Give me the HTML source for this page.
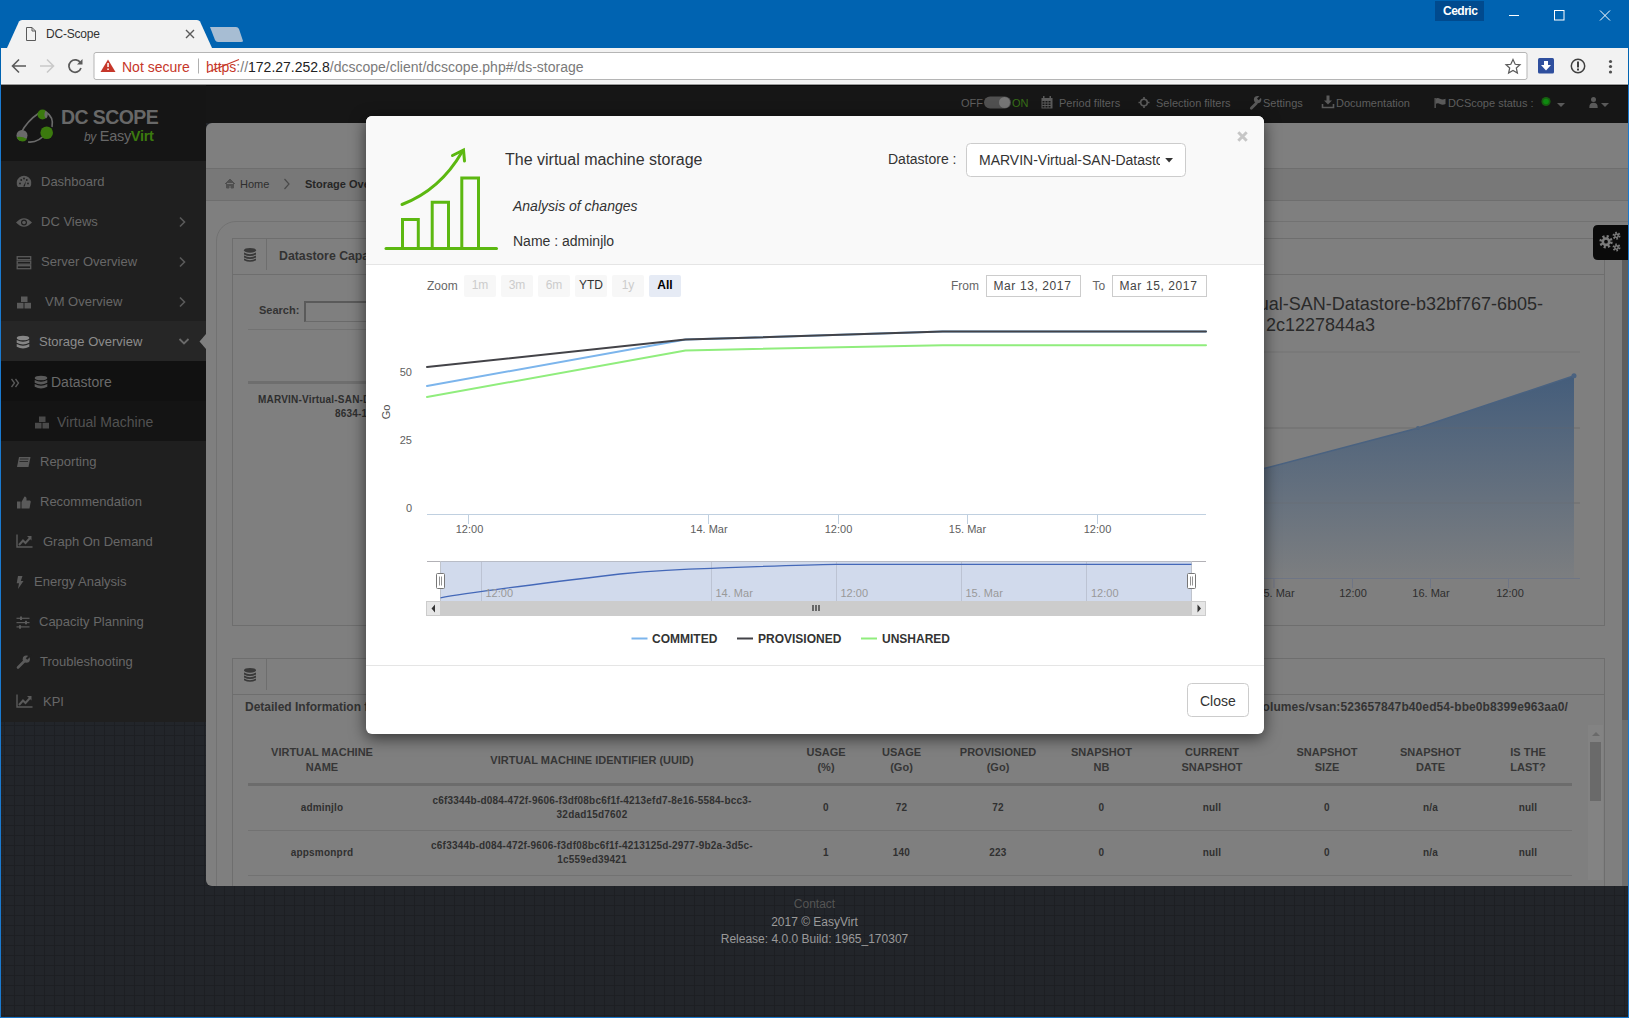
<!DOCTYPE html>
<html><head><meta charset="utf-8">
<style>
*{box-sizing:border-box;margin:0;padding:0}
html,body{width:1629px;height:1018px;overflow:hidden;background:#0063B1;font-family:"Liberation Sans",sans-serif}
.a{position:absolute}
/* chrome */
#tab{left:0;top:20px;width:220px;height:28px}
#toolbar{left:1px;top:48px;width:1627px;height:37px;background:#F2F2F2}
#omni{left:94px;top:53px;width:1432px;height:27px;background:#fff;border:1px solid #BFBFBF;border-radius:2px}
/* app */
#app{left:1px;top:85px;width:1627px;height:932px;background-color:#22252A;
 background-image:repeating-linear-gradient(90deg,transparent 0 3px,#1D1F23 3px 4px,transparent 4px 10px),repeating-linear-gradient(180deg,#1D1F23 0 1px,transparent 1px 10px);overflow:hidden}
#hdr{left:0;top:0;width:1627px;height:38px;background:#161616}
#side{left:0;top:0;width:205px;height:637px;background:#1F1F1F}
#logo{left:0;top:0;width:205px;height:76px;background:#151515}
.mi{position:absolute;left:0;width:205px;height:40px;color:#5E5E5E;font-size:13px;line-height:40px}
.mi .ic{position:absolute;left:15px;top:13px;width:15px;height:14px}
.mi .t{position:absolute;left:39px;top:0}
.mi .ch{position:absolute;left:177px;top:15px;width:7px;height:7px;border-right:2px solid #5A5A5A;border-top:2px solid #5A5A5A;transform:rotate(45deg)}
#panel{left:205px;top:38px;width:1422px;height:763px;background:#7F7F7F;border-radius:6px 0 0 6px;overflow:hidden}
.hd{top:12px;font-size:11px;color:#5E5E5E;white-space:nowrap}
#footer{left:0;top:803px;width:1627px;text-align:center;font-size:12px;color:#9A9A9A}
/* modal */
#modal{left:366px;top:116px;width:898px;height:618px;background:#fff;border-radius:6px;box-shadow:0 4px 16px rgba(0,0,0,.6);overflow:hidden}
</style></head><body>
<!-- browser chrome -->
<svg class="a" style="left:0;top:0" width="1629" height="85">
 <path d="M7 48 L19 21.5 Q20 20 22 20 L197 20 Q199 20 200 21.5 L212 48 Z" fill="#F2F2F2"/>
 <path d="M210 27 L236 27 Q238 27 239 29 L243 41 Q243 42 241 42 L218 42 Q216 42 215 40 Z" fill="#A7BDD3"/>
 <path d="M26.5 27.5 H32 L35.5 31 V40.5 H26.5 Z M32 27.5 V31 H35.5" fill="none" stroke="#5A5A5A" stroke-width="1"/>
 <path d="M186 30 L194 38 M194 30 L186 38" stroke="#5A5A5A" stroke-width="1.4"/>
 <rect x="1435" y="1" width="49" height="20" fill="#004A8E"/>
 <path d="M1509 15.5 H1519" stroke="#fff" stroke-width="1"/>
 <rect x="1554.5" y="10.5" width="9.5" height="9.5" fill="none" stroke="#fff" stroke-width="1"/>
 <path d="M1600 10.5 L1610 20.5 M1610 10.5 L1600 20.5" stroke="#fff" stroke-width="1"/>
 <rect x="1" y="48" width="1627" height="36" fill="#F2F2F2"/>
 <rect x="1" y="83" width="1627" height="1" fill="#F6F6F6"/>
 <rect x="1" y="84" width="1627" height="1" fill="#9A9A9A"/>
 <!-- back -->
 <path d="M26 66 H13 M19 59.5 L12.5 66 L19 72.5" fill="none" stroke="#5A5A5A" stroke-width="1.6"/>
 <path d="M40 66 H53 M47 59.5 L53.5 66 L47 72.5" fill="none" stroke="#C9C9C9" stroke-width="1.6"/>
 <path d="M80.5 63 A6.2 6.2 0 1 0 81 68" fill="none" stroke="#5A5A5A" stroke-width="1.7"/>
 <path d="M82.5 59 V64.5 H77 Z" fill="#5A5A5A"/>
 <rect x="94" y="52.5" width="1433" height="27" rx="2" fill="#fff" stroke="#B5B5B5"/>
 <path d="M108 59.5 L115.5 72 H100.5 Z" fill="#C6372A"/>
 <rect x="107.3" y="63" width="1.5" height="4" fill="#fff"/><rect x="107.3" y="68.5" width="1.5" height="1.5" fill="#fff"/>
 <rect x="198" y="58.5" width="1" height="15" fill="#B0B0B0"/>
 <path d="M1513 59.5 L1515.2 64.3 L1520 64.8 L1516.3 68 L1517.4 73 L1513 70.4 L1508.6 73 L1509.7 68 L1506 64.8 L1510.8 64.3 Z" fill="none" stroke="#5A5A5A" stroke-width="1.2"/>
 <rect x="1538" y="58" width="16" height="15.5" rx="1.5" fill="#2F4F9E"/>
 <path d="M1544 61 H1548 V65 H1551 L1546 70.5 L1541 65 H1544 Z" fill="#fff"/>
 <circle cx="1578" cy="66" r="6.7" fill="none" stroke="#404040" stroke-width="1.5"/>
 <rect x="1577" y="61.5" width="2" height="6" fill="#404040"/><rect x="1577" y="68.5" width="2" height="2" fill="#404040"/>
 <circle cx="1610.5" cy="61.5" r="1.6" fill="#505050"/><circle cx="1610.5" cy="66.5" r="1.6" fill="#505050"/><circle cx="1610.5" cy="72" r="1.6" fill="#505050"/>
</svg>
<div class="a" style="left:46px;top:27px;font-size:12px;color:#333;letter-spacing:-0.2px">DC-Scope</div>
<div class="a" style="left:1443px;top:4px;font-size:12px;color:#fff;font-weight:bold;letter-spacing:-0.5px">Cedric</div>
<div class="a" style="left:122px;top:58.5px;font-size:14px;color:#C6372A;white-space:nowrap">Not secure</div>
<div class="a" style="left:206px;top:58.5px;font-size:14px;color:#7A7A7A;white-space:nowrap"><span style="color:#C6372A">https</span>://<span style="color:#222">172.27.252.8</span>/dcscope/client/dcscope.php#/ds-storage</div>
<svg class="a" style="left:0;top:0" width="260" height="85"><path d="M207 72.5 L239 59.5" stroke="#C6372A" stroke-width="1.2"/></svg>
<div class="a" style="left:0;top:85px;width:1px;height:933px;background:#1A7AD0"></div>
<div class="a" style="left:1628px;top:85px;width:1px;height:933px;background:#1A7AD0"></div>
<div class="a" style="left:0;top:1017px;width:1629px;height:1px;background:#1874C8"></div>
<div id="app" class="a">
 <div id="hdr" class="a"></div>
 <svg class="a" style="left:0;top:0" width="1627" height="38">
  <rect x="0" y="0" width="1627" height="1" fill="#080808"/>
  <rect x="983" y="11.5" width="27" height="12" rx="6" fill="#505050"/>
  <circle cx="1003.5" cy="17.5" r="5.5" fill="#767676"/>
  <!-- calendar -->
  <g fill="#5A5A5A"><rect x="1040.5" y="13" width="11" height="10.5"/><rect x="1042" y="11" width="1.5" height="3"/><rect x="1048.5" y="11" width="1.5" height="3"/></g>
  <g fill="#161616"><rect x="1041.5" y="16" width="2" height="1.5"/><rect x="1044.5" y="16" width="2" height="1.5"/><rect x="1047.5" y="16" width="2" height="1.5"/><rect x="1041.5" y="18.5" width="2" height="1.5"/><rect x="1044.5" y="18.5" width="2" height="1.5"/><rect x="1047.5" y="18.5" width="2" height="1.5"/><rect x="1041.5" y="21" width="2" height="1.5"/><rect x="1044.5" y="21" width="2" height="1.5"/><rect x="1047.5" y="21" width="2" height="1.5"/></g>
  <!-- crosshair -->
  <circle cx="1143" cy="17.5" r="3.3" fill="none" stroke="#5A5A5A" stroke-width="1.6"/>
  <path d="M1143 12 V14.5 M1143 20.5 V23 M1137.5 17.5 H1140 M1146 17.5 H1148.5" stroke="#5A5A5A" stroke-width="1.6"/>
  <!-- wrench -->
  <path d="M1250.3 23.2 L1255.3 18.2" stroke="#5A5A5A" stroke-width="2.8" stroke-linecap="round"/>
  <circle cx="1256.6" cy="14.6" r="3.7" fill="#5A5A5A"/>
  <path d="M1256.8 14.4 L1261 10.2" stroke="#161616" stroke-width="2.3"/>
  <!-- download -->
  <path d="M1325.5 10.5 H1328.5 V15.5 H1331 L1327 19.5 L1323 15.5 H1325.5 Z" fill="#5A5A5A"/>
  <path d="M1321.5 19 V22.5 H1332.5 V19" stroke="#5A5A5A" stroke-width="1.6" fill="none"/>
  <!-- flag -->
  <rect x="1433.5" y="13" width="1.3" height="10" fill="#5A5A5A"/>
  <path d="M1434.8 13.5 Q1437 12.5 1439 13.8 Q1441.5 15 1444.5 13.8 V19 Q1441.5 20.3 1439 19 Q1437 17.8 1434.8 18.8 Z" fill="#5A5A5A"/>
  <circle cx="1545" cy="16.5" r="4.6" fill="#175E10"/><circle cx="1545" cy="16.5" r="2.8" fill="#0E8A10"/>
  <path d="M1556 18 H1564 L1560 22 Z" fill="#5A5A5A"/>
  <circle cx="1592.5" cy="14.5" r="2.5" fill="#5A5A5A"/><path d="M1588.3 23 Q1588 17.8 1592.5 17.8 Q1597 17.8 1596.7 23 Z" fill="#5A5A5A"/>
  <path d="M1600 18 H1608 L1604 22 Z" fill="#5A5A5A"/>
 </svg>
 <div class="a hd" style="left:960px">OFF</div>
 <div class="a hd" style="left:1011px;color:#366E16">ON</div>
 <div class="a hd" style="left:1058px">Period filters</div>
 <div class="a hd" style="left:1155px">Selection filters</div>
 <div class="a hd" style="left:1262px">Settings</div>
 <div class="a hd" style="left:1335px">Documentation</div>
 <div class="a hd" style="left:1447px">DCScope status :</div>
 <div id="side" class="a">
  <div id="logo" class="a"></div>
  <svg class="a" style="left:0;top:0" width="205" height="76">
   <path d="M27 57 Q38 58 46 47 M20 48 Q26 36 38 28 M45 27 Q53 32 51 42" fill="none" stroke="#6A6A6A" stroke-width="1.6"/>
   <circle cx="41.5" cy="29.5" r="5" fill="#3B7A0E"/><path d="M44.5 25.5 A5 5 0 0 1 45 33.5 Q42 31 44.5 25.5Z" fill="#6A6A6A"/>
   <circle cx="45.7" cy="47.7" r="6.3" fill="#3B7A0E"/>
   <circle cx="21" cy="50.5" r="5.5" fill="#6A6A6A"/><path d="M16 52 A5.5 5.5 0 0 0 26 54 Q21 51 16 52Z" fill="#3B7A0E"/>
  </svg>
  <div class="a" style="left:60px;top:20.5px;font-size:19.5px;font-weight:bold;color:#686868;letter-spacing:-0.6px;white-space:nowrap">DC SCOPE</div>
  <div class="a" style="left:83px;top:43px;font-size:14.5px;color:#686868;white-space:nowrap;letter-spacing:-0.3px"><i style="font-size:12px">by</i> Easy<span style="color:#3B7A0E;font-weight:bold">Virt</span></div>
  <div class="a" style="left:0;top:76px;width:205px;height:561px;background:#1F1F1F"></div>
  <div class="a" style="left:0;top:236px;width:205px;height:40px;background:#262626"></div>
  <div class="a" style="left:0;top:276px;width:205px;height:40px;background:#111111"></div>
  <div class="a" style="left:0;top:316px;width:205px;height:40px;background:#141414"></div>
  <div class="a" style="left:40px;top:77px;height:40px;line-height:40px;font-size:13px;color:#676767;white-space:nowrap">Dashboard</div>
  <div class="a" style="left:40px;top:117px;height:40px;line-height:40px;font-size:13px;color:#676767;white-space:nowrap">DC Views</div>
  <div class="a" style="left:40px;top:157px;height:40px;line-height:40px;font-size:13px;color:#676767;white-space:nowrap">Server Overview</div>
  <div class="a" style="left:44px;top:197px;height:40px;line-height:40px;font-size:13px;color:#676767;white-space:nowrap">VM Overview</div>
  <div class="a" style="left:38px;top:237px;height:40px;line-height:40px;font-size:13px;color:#8C8C8C;white-space:nowrap">Storage Overview</div>
  <div class="a" style="left:50px;top:277px;height:40px;line-height:40px;font-size:14px;color:#6A6A6A;white-space:nowrap">Datastore</div>
  <div class="a" style="left:56px;top:317px;height:40px;line-height:40px;font-size:14px;color:#525252;white-space:nowrap">Virtual Machine</div>
  <div class="a" style="left:39px;top:357px;height:40px;line-height:40px;font-size:13px;color:#676767;white-space:nowrap">Reporting</div>
  <div class="a" style="left:39px;top:397px;height:40px;line-height:40px;font-size:13px;color:#676767;white-space:nowrap">Recommendation</div>
  <div class="a" style="left:42px;top:437px;height:40px;line-height:40px;font-size:13px;color:#676767;white-space:nowrap">Graph On Demand</div>
  <div class="a" style="left:33px;top:477px;height:40px;line-height:40px;font-size:13px;color:#676767;white-space:nowrap">Energy Analysis</div>
  <div class="a" style="left:38px;top:517px;height:40px;line-height:40px;font-size:13px;color:#676767;white-space:nowrap">Capacity Planning</div>
  <div class="a" style="left:39px;top:557px;height:40px;line-height:40px;font-size:13px;color:#676767;white-space:nowrap">Troubleshooting</div>
  <div class="a" style="left:42px;top:597px;height:40px;line-height:40px;font-size:13px;color:#676767;white-space:nowrap">KPI</div>
  <svg class="a" style="left:0;top:76px" width="205" height="560">
<g transform="translate(0,21)" fill="#5A5A5A"><path d="M16.9 5 A7.3 7.3 0 1 1 29.1 5 Z"/><g fill="#1F1F1F"><circle cx="19" cy="1.5" r="0.9"/><circle cx="20.2" cy="-2" r="0.9"/><circle cx="23" cy="-3.5" r="0.9"/><circle cx="25.8" cy="-2" r="0.9"/><circle cx="27" cy="1.5" r="0.9"/><path d="M22.2 4.5 L25 -1 L23.8 4.5Z"/></g></g>
<g transform="translate(0,61)" fill="#5A5A5A"><path d="M15 0.5 Q23 -8 31 0.5 Q23 9 15 0.5Z"/><circle cx="23" cy="0.5" r="3" fill="#1F1F1F"/><circle cx="23" cy="0.5" r="1.8"/></g>
<g transform="translate(0,101)" fill="none" stroke="#5A5A5A" stroke-width="1.3"><rect x="16.2" y="-5.3" width="13.5" height="3"/><rect x="16.2" y="-0.8" width="13.5" height="3"/><rect x="16.2" y="3.7" width="13.5" height="3"/></g>
<g transform="translate(0,141)" fill="#5A5A5A"><rect x="20" y="-5.5" width="6.5" height="5.5"/><rect x="16" y="0.8" width="6.5" height="5.7"/><rect x="23.5" y="0.8" width="6.5" height="5.7"/></g>
<g transform="translate(0,181)" fill="#868686"><ellipse cx="22" cy="-4" rx="6.3" ry="2.3"/><path d="M15.7 -2 Q22 1.5 28.3 -2 V0.8 Q22 4.3 15.7 0.8Z M15.7 2 Q22 5.5 28.3 2 V4.8 Q22 8.3 15.7 4.8Z"/></g>
<g transform="translate(0,221)" fill="#5A5A5A"><path d="M10.5 -3 L13.5 1 L10.5 5 M14.5 -3 L17.5 1 L14.5 5" fill="none" stroke="#5A5A5A" stroke-width="1.3"/><ellipse cx="40" cy="-4" rx="6.3" ry="2.3"/><path d="M33.7 -2 Q40 1.5 46.3 -2 V0.8 Q40 4.3 33.7 0.8Z M33.7 2 Q40 5.5 46.3 2 V4.8 Q40 8.3 33.7 4.8Z"/></g>
<g transform="translate(0,261)" fill="#4A4A4A"><rect x="38" y="-5.5" width="6.5" height="5.5"/><rect x="34" y="0.8" width="6.5" height="5.7"/><rect x="41.5" y="0.8" width="6.5" height="5.7"/></g>
<g transform="translate(0,301)" fill="#5A5A5A"><path d="M18 -5 H29.5 L27.5 5 H16Z"/><path d="M19 -3 H27.5 M18.5 -0.5 H27" stroke="#1F1F1F" stroke-width="0.8"/></g>
<g transform="translate(0,341)" fill="#5A5A5A"><path d="M16 -0.5 H19.5 V6.5 H16Z M20.5 0 L23.5 -5.5 Q26 -5.5 25.5 -1.5 H29 Q30.5 -0.5 29.5 1 L28.5 6.5 H20.5Z"/></g>
<g transform="translate(0,379.5)" fill="#5A5A5A"><path d="M16 -6 V6.5 H31.5" fill="none" stroke="#5A5A5A" stroke-width="1.4"/><path d="M18 4.5 L22 0 L24.5 2.5 L29 -2.5" fill="none" stroke="#5A5A5A" stroke-width="2"/><path d="M26 -4.5 H30.5 V0Z" fill="#5A5A5A"/></g>
<g transform="translate(0,421)" fill="#5A5A5A"><path d="M17 -6 H21.5 L19.8 -1 H22.5 L17 7 L18 1.3 H15.7Z"/></g>
<g transform="translate(0,461)" fill="#5A5A5A"><rect x="15.5" y="-4.3" width="13" height="1.2"/><rect x="15.5" y="0" width="13" height="1.2"/><rect x="15.5" y="4.3" width="13" height="1.2"/><rect x="19" y="-5.5" width="2" height="3.5"/><rect x="24" y="-1.2" width="2" height="3.5"/><rect x="18" y="3.2" width="2" height="3.5"/></g>
<g transform="translate(0,501)" fill="#5A5A5A"><path d="M17 5.5 L23 -0.5" stroke="#5A5A5A" stroke-width="2.6" stroke-linecap="round"/><circle cx="25.3" cy="-2.8" r="3.6"/><path d="M25.5 -3 L30 -7.5" stroke="#1F1F1F" stroke-width="2.2"/></g>
<g transform="translate(0,539.5)" fill="#5A5A5A"><path d="M16 -6 V6.5 H31.5" fill="none" stroke="#5A5A5A" stroke-width="1.4"/><path d="M18 4.5 L22 0 L24.5 2.5 L29 -2.5" fill="none" stroke="#5A5A5A" stroke-width="2"/><path d="M26 -4.5 H30.5 V0Z" fill="#5A5A5A"/></g><path d="M179 56.5 L183.5 61 L179 65.5" fill="none" stroke="#5A5A5A" stroke-width="1.6"/><path d="M179 96.5 L183.5 101 L179 105.5" fill="none" stroke="#5A5A5A" stroke-width="1.6"/><path d="M179 136.5 L183.5 141 L179 145.5" fill="none" stroke="#5A5A5A" stroke-width="1.6"/><path d="M178.5 178 L183 182.5 L187.5 178" fill="none" stroke="#6A6A6A" stroke-width="1.8"/><path d="M205 173 L198.5 180.5 L205 188Z" fill="#7F7F7F"/>
  </svg>
 </div>
 <div id="panel" class="a">
  <div class="a" style="left:0px;top:45px;width:1422px;height:33px;background:#787878;border-top:1px solid #6E6E6E;border-bottom:1px solid #6E6E6E"></div>
  <div class="a" style="left:34px;top:55px;white-space:nowrap;font-size:11px;color:#2E2E2E">Home</div>
  <div class="a" style="left:99px;top:55px;white-space:nowrap;font-size:11px;font-weight:bold;color:#262626">Storage Overview</div>
  <div class="a" style="left:10px;top:98px;width:1440px;height:700px;border:1px solid #727272;border-radius:20px"></div>
  <div class="a" style="left:26px;top:115px;width:1373px;height:388px;border:1px solid #6E6E6E"></div>
  <div class="a" style="left:26px;top:151px;width:1373px;height:1px;background:#6E6E6E"></div>
  <div class="a" style="left:60px;top:116px;width:1px;height:31px;background:#6E6E6E"></div>
  <div class="a" style="left:73px;top:126px;white-space:nowrap;font-size:12.3px;font-weight:bold;color:#333">Datastore Capacity</div>
  <div class="a" style="left:53px;top:181px;white-space:nowrap;font-size:11px;font-weight:bold;color:#333">Search:</div>
  <div class="a" style="left:98px;top:178px;width:120px;height:21px;border:1px solid #6A6A6A;border-top:2px solid #5A5A5A;border-left:2px solid #5A5A5A"></div>
  <div class="a" style="left:42px;top:206px;width:700px;height:1px;background:#727272"></div>
  <div class="a" style="left:42px;top:258px;width:700px;height:3px;background:#6E6E6E"></div>
  <div class="a" style="left:52px;top:270.5px;white-space:nowrap;font-size:10px;font-weight:bold;color:#2E2E2E;letter-spacing:0.2px">MARVIN-Virtual-SAN-Datastore-b32bf767-6b05-</div>
  <div class="a" style="left:129px;top:284.5px;white-space:nowrap;font-size:10px;font-weight:bold;color:#2E2E2E;letter-spacing:0.2px">8634-1c2c1227844a3</div>
  <div class="a" style="left:737px;top:171px;width:600px;text-align:right;font-size:18px;color:#2A2A2A;white-space:nowrap">MARVIN-Virtual-SAN-Datastore-b32bf767-6b05-</div>
  <div class="a" style="left:569px;top:192px;width:600px;text-align:right;font-size:18px;color:#2A2A2A;white-space:nowrap">2c1227844a3</div>
  <svg class="a" style="left:0;top:0" width="1422" height="763" viewBox="206 123 1422 763">
 <defs><linearGradient id="ag" x1="0" y1="0" x2="0" y2="1"><stop offset="0" stop-color="#445D7B"/><stop offset="1" stop-color="#7C7E80"/></linearGradient></defs>
 <path d="M1240 352 H1580 M1240 428 H1580 M1240 503 H1580" stroke="#747474" stroke-width="1"/>
 <path d="M1000 500 L1264 468.6 L1418 428 L1574 375.7 V578 H1000 Z" fill="url(#ag)"/>
 <path d="M1000 500 L1264 468.6 L1418 428 L1574 375.7" fill="none" stroke="#4A6280" stroke-width="1.5"/>
 <circle cx="1418" cy="428" r="2" fill="#4A6280"/><circle cx="1574" cy="375.7" r="2.5" fill="#4A6280"/>
 <path d="M1240 428 H1580 M1240 503 H1580" stroke="#6A6A6A" stroke-width="1" opacity="0.35"/>
 <path d="M1240 578.5 H1580" stroke="#6E7585" stroke-width="1"/>
 <path d="M1274 578 V588 M1352.5 578 V588 M1430.5 578 V588 M1508.5 578 V588" stroke="#6E7585" stroke-width="1"/>
 <g font-family="Liberation Sans" font-size="11" fill="#2E2E2E" text-anchor="middle">
  <text x="1276" y="597">15. Mar</text><text x="1353" y="597">12:00</text><text x="1431" y="597">16. Mar</text><text x="1510" y="597">12:00</text>
 </g>
 <!-- gear button -->
 <path d="M1628 225 H1598 Q1593 225 1593 230 V255 Q1593 260 1598 260 H1628Z" fill="#0A0A0A"/>
 <g fill="none" stroke="#7A7A7A">
  <circle cx="1606" cy="241.7" r="5.3" stroke-width="2.8" stroke-dasharray="2.1 2.06"/>
  <circle cx="1606" cy="241.7" r="3.2" stroke-width="2.6"/>
  <circle cx="1616.5" cy="235.8" r="3" stroke-width="2" stroke-dasharray="1.6 1.54"/>
  <circle cx="1616.5" cy="235.8" r="1.7" stroke-width="1.5"/>
  <circle cx="1616.5" cy="247.5" r="3" stroke-width="2" stroke-dasharray="1.6 1.54"/>
  <circle cx="1616.5" cy="247.5" r="1.7" stroke-width="1.5"/>
 </g>
</svg>
  <div class="a" style="left:1416px;top:137px;width:6px;height:460px;background:#5E5E5E"></div>
  <div class="a" style="left:1416px;top:597px;width:6px;height:166px;background:#6E6E6E"></div>
  <div class="a" style="left:26px;top:535px;width:1373px;height:260px;border:1px solid #6E6E6E"></div>
  <div class="a" style="left:26px;top:571px;width:1373px;height:1px;background:#6E6E6E"></div>
  <div class="a" style="left:60px;top:536px;width:1px;height:31px;background:#6E6E6E"></div>
  <svg class="a" style="left:34px;top:543.5px" width="20" height="18"><g fill="#393939"><ellipse cx="10" cy="3.3" rx="6" ry="2.4"/><path d="M4 5.6 Q10 8.8 16 5.6 V7.4 Q10 10.6 4 7.4Z M4 8.6 Q10 11.8 16 8.6 V10.4 Q10 13.6 4 10.4Z M4 11.6 Q10 14.8 16 11.6 V13.2 Q10 16.4 4 13.2Z"/></g></svg>
  <svg class="a" style="left:34px;top:123.5px" width="20" height="18"><g fill="#393939"><ellipse cx="10" cy="3.3" rx="6" ry="2.4"/><path d="M4 5.6 Q10 8.8 16 5.6 V7.4 Q10 10.6 4 7.4Z M4 8.6 Q10 11.8 16 8.6 V10.4 Q10 13.6 4 10.4Z M4 11.6 Q10 14.8 16 11.6 V13.2 Q10 16.4 4 13.2Z"/></g></svg>
  <svg class="a" style="left:18px;top:55px" width="12" height="11"><path d="M1 6 L6 1 L11 6 M2.5 5 V10 H5 V7.5 H7 V10 H9.5 V5" fill="#505050" stroke="#505050" stroke-width="1"/></svg>
  <svg class="a" style="left:77px;top:55px" width="8" height="12"><path d="M1.5 1 L6 6 L1.5 11" fill="none" stroke="#4A4A4A" stroke-width="1.2"/></svg>
  <div class="a" style="left:39px;top:577px;white-space:nowrap;font-size:12px;font-weight:bold;color:#333">Detailed Information for datastore : MARVIN</div>
  <div class="a" style="left:762px;top:577px;width:600px;text-align:right;white-space:nowrap;font-size:12px;font-weight:bold;color:#333;letter-spacing:0.1px">ds:///vmfs/volumes/vsan:523657847b40ed54-bbe0b8399e963aa0/</div>
  <div class="a" style="left:1382px;top:602px;width:15px;height:155px;background:#838383"></div>
  <div class="a" style="left:1384px;top:619px;width:11px;height:59px;background:#6A6A6A"></div>
  <svg class="a" style="left:1384px;top:607px" width="12" height="8"><path d="M2 6 L6 2 L10 6Z" fill="#6A6A6A"/></svg>
  <div class="a" style="left:-34px;top:622px;width:300px;text-align:center;font-size:11px;font-weight:bold;color:#363636;line-height:15px">VIRTUAL MACHINE<br>NAME</div>
  <div class="a" style="left:236px;top:629.5px;width:300px;text-align:center;font-size:11px;font-weight:bold;color:#363636;line-height:15px">VIRTUAL MACHINE IDENTIFIER (UUID)</div>
  <div class="a" style="left:470px;top:622px;width:300px;text-align:center;font-size:11px;font-weight:bold;color:#363636;line-height:15px">USAGE<br>(%)</div>
  <div class="a" style="left:545.5px;top:622px;width:300px;text-align:center;font-size:11px;font-weight:bold;color:#363636;line-height:15px">USAGE<br>(Go)</div>
  <div class="a" style="left:642px;top:622px;width:300px;text-align:center;font-size:11px;font-weight:bold;color:#363636;line-height:15px">PROVISIONED<br>(Go)</div>
  <div class="a" style="left:745.5px;top:622px;width:300px;text-align:center;font-size:11px;font-weight:bold;color:#363636;line-height:15px">SNAPSHOT<br>NB</div>
  <div class="a" style="left:856px;top:622px;width:300px;text-align:center;font-size:11px;font-weight:bold;color:#363636;line-height:15px">CURRENT<br>SNAPSHOT</div>
  <div class="a" style="left:971px;top:622px;width:300px;text-align:center;font-size:11px;font-weight:bold;color:#363636;line-height:15px">SNAPSHOT<br>SIZE</div>
  <div class="a" style="left:1074.5px;top:622px;width:300px;text-align:center;font-size:11px;font-weight:bold;color:#363636;line-height:15px">SNAPSHOT<br>DATE</div>
  <div class="a" style="left:1172px;top:622px;width:300px;text-align:center;font-size:11px;font-weight:bold;color:#363636;line-height:15px">IS THE<br>LAST?</div>
  <div class="a" style="left:42px;top:660px;width:1324px;height:3px;background:#6C6C6C"></div>
  <div class="a" style="left:42px;top:707px;width:1324px;height:1px;background:#727272"></div>
  <div class="a" style="left:42px;top:752px;width:1324px;height:1px;background:#727272"></div>
  <div class="a" style="left:-54px;top:677.5px;width:340px;text-align:center;font-size:10px;font-weight:bold;color:#303030;letter-spacing:0.2px;line-height:14px">adminjlo</div>
  <div class="a" style="left:216px;top:670.5px;width:340px;text-align:center;font-size:10px;font-weight:bold;color:#303030;letter-spacing:0.2px;line-height:14px">c6f3344b-d084-472f-9606-f3df08bc6f1f-4213efd7-8e16-5584-bcc3-<br>32dad15d7602</div>
  <div class="a" style="left:450px;top:677.5px;width:340px;text-align:center;font-size:10px;font-weight:bold;color:#303030;letter-spacing:0.2px;line-height:14px">0</div>
  <div class="a" style="left:525.5px;top:677.5px;width:340px;text-align:center;font-size:10px;font-weight:bold;color:#303030;letter-spacing:0.2px;line-height:14px">72</div>
  <div class="a" style="left:622px;top:677.5px;width:340px;text-align:center;font-size:10px;font-weight:bold;color:#303030;letter-spacing:0.2px;line-height:14px">72</div>
  <div class="a" style="left:725.5px;top:677.5px;width:340px;text-align:center;font-size:10px;font-weight:bold;color:#303030;letter-spacing:0.2px;line-height:14px">0</div>
  <div class="a" style="left:836px;top:677.5px;width:340px;text-align:center;font-size:10px;font-weight:bold;color:#303030;letter-spacing:0.2px;line-height:14px">null</div>
  <div class="a" style="left:951px;top:677.5px;width:340px;text-align:center;font-size:10px;font-weight:bold;color:#303030;letter-spacing:0.2px;line-height:14px">0</div>
  <div class="a" style="left:1054.5px;top:677.5px;width:340px;text-align:center;font-size:10px;font-weight:bold;color:#303030;letter-spacing:0.2px;line-height:14px">n/a</div>
  <div class="a" style="left:1152px;top:677.5px;width:340px;text-align:center;font-size:10px;font-weight:bold;color:#303030;letter-spacing:0.2px;line-height:14px">null</div>
  <div class="a" style="left:-54px;top:722.5px;width:340px;text-align:center;font-size:10px;font-weight:bold;color:#303030;letter-spacing:0.2px;line-height:14px">appsmonprd</div>
  <div class="a" style="left:216px;top:715.5px;width:340px;text-align:center;font-size:10px;font-weight:bold;color:#303030;letter-spacing:0.2px;line-height:14px">c6f3344b-d084-472f-9606-f3df08bc6f1f-4213125d-2977-9b2a-3d5c-<br>1c559ed39421</div>
  <div class="a" style="left:450px;top:722.5px;width:340px;text-align:center;font-size:10px;font-weight:bold;color:#303030;letter-spacing:0.2px;line-height:14px">1</div>
  <div class="a" style="left:525.5px;top:722.5px;width:340px;text-align:center;font-size:10px;font-weight:bold;color:#303030;letter-spacing:0.2px;line-height:14px">140</div>
  <div class="a" style="left:622px;top:722.5px;width:340px;text-align:center;font-size:10px;font-weight:bold;color:#303030;letter-spacing:0.2px;line-height:14px">223</div>
  <div class="a" style="left:725.5px;top:722.5px;width:340px;text-align:center;font-size:10px;font-weight:bold;color:#303030;letter-spacing:0.2px;line-height:14px">0</div>
  <div class="a" style="left:836px;top:722.5px;width:340px;text-align:center;font-size:10px;font-weight:bold;color:#303030;letter-spacing:0.2px;line-height:14px">null</div>
  <div class="a" style="left:951px;top:722.5px;width:340px;text-align:center;font-size:10px;font-weight:bold;color:#303030;letter-spacing:0.2px;line-height:14px">0</div>
  <div class="a" style="left:1054.5px;top:722.5px;width:340px;text-align:center;font-size:10px;font-weight:bold;color:#303030;letter-spacing:0.2px;line-height:14px">n/a</div>
  <div class="a" style="left:1152px;top:722.5px;width:340px;text-align:center;font-size:10px;font-weight:bold;color:#303030;letter-spacing:0.2px;line-height:14px">null</div>
 </div>
 <div id="footer" class="a" style="top:811px;line-height:17.5px"><div style="color:#555">Contact</div><div>2017 © EasyVirt</div><div>Release: 4.0.0 Build: 1965_170307</div></div>
</div>
<div id="modal" class="a">
 <svg class="a" style="left:0;top:0" width="898" height="618" viewBox="366 116 898 618">
  <rect x="366" y="116" width="898" height="148" fill="#F9F9F9"/>
  <rect x="366" y="264" width="898" height="1" fill="#E5E5E5"/>
  <rect x="366" y="665" width="898" height="1" fill="#E5E5E5"/>
  <!-- logo icon -->
  <g fill="none" stroke="#5CB811" stroke-width="3" stroke-linecap="round">
   <path d="M386 248.5 H496.5"/>
   <path d="M402.5 247 V219.5 H418.3 V247"/>
   <path d="M432.2 247 V202.3 H448.5 V247"/>
   <path d="M461.8 247 V178 H478.5 V247"/>
   <path d="M402 204.5 Q440 190 462 152"/>
   <path d="M452.5 155.5 L463.5 150 L464.5 161"/>
  </g>
  <!-- close x -->
  <path d="M1238.3 132.3 L1246.7 140.7 M1246.7 132.3 L1238.3 140.7" stroke="#C6C6C6" stroke-width="3"/>
  <!-- dropdown -->
  <rect x="966.5" y="143.5" width="219" height="33" rx="4" fill="#fff" stroke="#CCCCCC"/>
  <path d="M1165.2 158 H1173 L1169.1 162.5 Z" fill="#333"/>
  <!-- zoom buttons -->
  <rect x="464" y="275" width="32" height="22" rx="2" fill="#F7F7F7"/>
  <rect x="501" y="275" width="32" height="22" rx="2" fill="#F7F7F7"/>
  <rect x="538" y="275" width="32" height="22" rx="2" fill="#F7F7F7"/>
  <rect x="575" y="275" width="32" height="22" rx="2" fill="#F7F7F7"/>
  <rect x="612" y="275" width="32" height="22" rx="2" fill="#F7F7F7"/>
  <rect x="649" y="275" width="32" height="22" rx="2" fill="#E6EBF5"/>
  <g font-family="Liberation Sans" font-size="12" text-anchor="middle">
   <text x="480" y="289" fill="#CCCCCC">1m</text><text x="517" y="289" fill="#CCCCCC">3m</text><text x="554" y="289" fill="#CCCCCC">6m</text>
   <text x="591" y="289" fill="#333333">YTD</text><text x="628" y="289" fill="#CCCCCC">1y</text><text x="665" y="289" fill="#000" font-weight="bold">All</text>
  </g>
  <text x="427" y="289.5" font-family="Liberation Sans" font-size="12" fill="#666">Zoom</text>
  <text x="951" y="289.5" font-family="Liberation Sans" font-size="12" fill="#666">From</text>
  <text x="1092.5" y="289.5" font-family="Liberation Sans" font-size="12" fill="#666">To</text>
  <rect x="986.5" y="275.5" width="94" height="21" fill="#fff" stroke="#CCCCCC"/>
  <rect x="1112.5" y="275.5" width="94" height="21" fill="#fff" stroke="#CCCCCC"/>
  <text x="993.5" y="289.5" font-family="Liberation Sans" font-size="12" fill="#444" letter-spacing="0.6">Mar 13, 2017</text>
  <text x="1119.5" y="289.5" font-family="Liberation Sans" font-size="12" fill="#444" letter-spacing="0.6">Mar 15, 2017</text>
  <!-- chart -->
  <g font-family="Liberation Sans" font-size="11" fill="#606060">
   <text x="412" y="376" text-anchor="end">50</text>
   <text x="412" y="444" text-anchor="end">25</text>
   <text x="412" y="512" text-anchor="end">0</text>
   <text transform="translate(389.5 412) rotate(-90)" text-anchor="middle" fill="#4D4D4D">Go</text>
   <text x="469.5" y="533" text-anchor="middle">12:00</text>
   <text x="709" y="533" text-anchor="middle">14. Mar</text>
   <text x="838.5" y="533" text-anchor="middle">12:00</text>
   <text x="967.5" y="533" text-anchor="middle">15. Mar</text>
   <text x="1097.5" y="533" text-anchor="middle">12:00</text>
  </g>
  <path d="M427 514.5 H1206" stroke="#C0D0E0" stroke-width="1"/>
  <path d="M468.5 514 V524 M708.5 514 V524 M838.5 514 V524 M967.5 514 V524 M1097.5 514 V524" stroke="#C0D0E0" stroke-width="1"/>
  <g fill="none" stroke-width="2" stroke-linejoin="round" stroke-linecap="round">
   <path d="M427 386 L685.5 339.6 L942.7 331.6 L1206 331.6" stroke="#7CB5EC"/>
   <path d="M427 397 L685.5 350.4 L942.7 345.2 L1206 345.2" stroke="#90ED7D"/>
   <path d="M427 367 L685.5 339.6 L942.7 331.6 L1206 331.6" stroke="#434348"/>
  </g>
  <!-- navigator -->
  <rect x="440.5" y="561" width="751" height="40" fill="#D1DAEC"/>
  <path d="M427 561.5 H440.5 M1191.5 561.5 H1206" stroke="#B2B1B6" stroke-width="1"/>
  <path d="M440.5 561.5 H1191.5" stroke="#B8BCC6" stroke-width="1"/>
  <path d="M440.5 561 V601 M1191.5 561 V601" stroke="#C0C4CC" stroke-width="1"/>
  <path d="M481.5 562 V601 M711.5 562 V601 M836.5 562 V601 M961.5 562 V601 M1086.5 562 V601" stroke="#BCC3D3" stroke-width="1"/>
  <path d="M440.5 597.8 C470 592 520 586 620 574 C660 570 690 568.8 711.5 568.3 C760 566.5 800 564.8 836.5 564.3 L1191.5 564.3" fill="none" stroke="#4468B8" stroke-width="1.3"/>
  <g font-family="Liberation Sans" font-size="11" fill="#999">
   <text x="485.5" y="597">12:00</text><text x="715.5" y="597">14. Mar</text><text x="840.5" y="597">12:00</text><text x="965.5" y="597">15. Mar</text><text x="1091" y="597">12:00</text>
  </g>
  <rect x="436.5" y="573.5" width="8" height="15" rx="1" fill="#fff" stroke="#777" stroke-width="1"/>
  <path d="M439.5 576.5 V585.5 M441.5 576.5 V585.5" stroke="#777" stroke-width="0.8"/>
  <rect x="1187.5" y="573.5" width="8" height="15" rx="1" fill="#fff" stroke="#777" stroke-width="1"/>
  <path d="M1190.5 576.5 V585.5 M1192.5 576.5 V585.5" stroke="#777" stroke-width="0.8"/>
  <rect x="426.5" y="601.5" width="779" height="14" fill="#CCCCCC" stroke="#CCCCCC"/>
  <rect x="426.5" y="601.5" width="14" height="14" fill="#E6E6E6" stroke="#CCCCCC"/>
  <rect x="1191.5" y="601.5" width="14" height="14" fill="#E6E6E6" stroke="#CCCCCC"/>
  <path d="M435 604.5 L431.5 608.5 L435 612.5Z M1197.5 604.5 L1201 608.5 L1197.5 612.5Z" fill="#333"/>
  <path d="M813 605 V611 M816 605 V611 M819 605 V611" stroke="#333" stroke-width="1.3"/>
  <!-- legend -->
  <path d="M631.5 638.5 H647.5" stroke="#7CB5EC" stroke-width="2"/>
  <path d="M737 638.5 H753" stroke="#434348" stroke-width="2"/>
  <path d="M861 638.5 H877" stroke="#90ED7D" stroke-width="2"/>
  <g font-family="Liberation Sans" font-size="12" font-weight="bold" fill="#333">
   <text x="652" y="643">COMMITED</text><text x="758" y="643">PROVISIONED</text><text x="882" y="643">UNSHARED</text>
  </g>
  <!-- close button -->
  <rect x="1187.5" y="683.5" width="61" height="33" rx="4" fill="#fff" stroke="#CCCCCC"/>
 </svg>
 <div class="a" style="left:139px;top:35px;font-size:16px;color:#333;white-space:nowrap">The virtual machine storage</div>
 <div class="a" style="left:147px;top:82px;font-size:14px;font-style:italic;color:#333;white-space:nowrap">Analysis of changes</div>
 <div class="a" style="left:147px;top:116.5px;font-size:14px;color:#333;white-space:nowrap">Name : adminjlo</div>
 <div class="a" style="left:522px;top:35px;font-size:14px;color:#333;white-space:nowrap">Datastore :</div>
 <div class="a" style="left:613px;top:36px;width:181px;overflow:hidden;font-size:14px;color:#333;white-space:nowrap">MARVIN-Virtual-SAN-Datastore-b32bf767</div>
 <div class="a" style="left:834px;top:576.5px;font-size:14px;color:#333;white-space:nowrap">Close</div>
</div>
</body></html>
